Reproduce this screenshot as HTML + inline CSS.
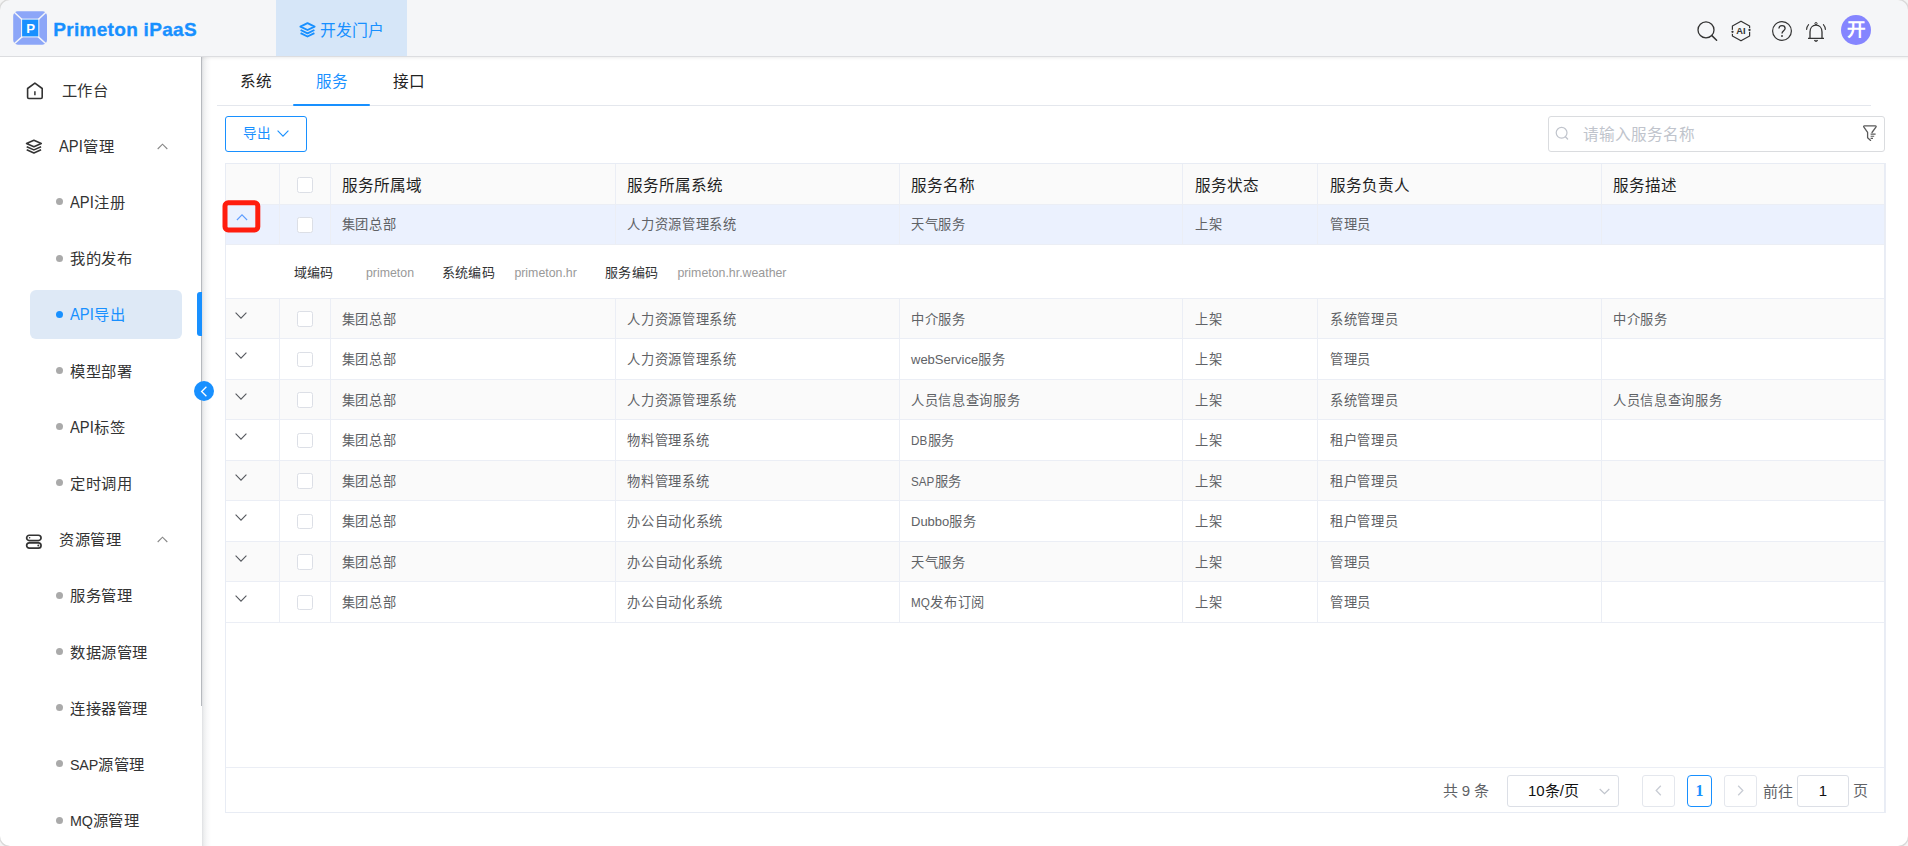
<!DOCTYPE html>
<html lang="zh-CN">
<head>
<meta charset="utf-8">
<title>Primeton iPaaS</title>
<style>
*{box-sizing:border-box;margin:0;padding:0}
html,body{width:1908px;height:846px;overflow:hidden;background:#fff}
body{font-family:"Liberation Sans",sans-serif;color:#333;position:relative}
.abs{position:absolute}
svg{display:block;overflow:visible}
i{font-style:normal}

/* header */
#hdr{position:absolute;left:0;top:0;width:1908px;height:56px;background:#f5f6f8}
#hdrline{position:absolute;left:0;top:56px;width:1908px;height:1px;background:#dcdde0}
#logo{position:absolute;left:13px;top:11px;width:34px;height:34px}
#brand{position:absolute;left:53.3px;top:17px;height:26px;line-height:26px;font-size:19px;font-weight:bold;color:#1890ff;white-space:nowrap;letter-spacing:0.3px;-webkit-text-stroke:0.35px #1890ff}
#ptab{position:absolute;left:276px;top:0;width:131px;height:56px;background:#d6e6f8}
#ptab span{position:absolute;left:44.4px;top:19.4px;height:24px;line-height:24px;font-size:15.9px;color:#1890ff;white-space:nowrap}
#ptab svg{position:absolute;left:22.8px;top:22.3px}
#avatar{position:absolute;left:1841px;top:15px;width:30px;height:30px;border-radius:50%;background:#8585ff;color:#fff;font-weight:bold;font-size:18.6px;line-height:29px;text-align:center}

/* sidebar */
#side{position:absolute;left:0;top:57px;width:201px;height:789px;background:#fff}
#thumb{position:absolute;left:201px;top:57px;width:1px;height:649px;background:#b6b9be}
.mi{position:absolute;left:0;width:201px;height:56px;line-height:56px;font-size:15.3px;letter-spacing:.6px;color:#333;white-space:nowrap}
.la{font-size:14.3px;letter-spacing:-.2px}
.ap{display:inline-block;line-height:1;font-size:16.4px;letter-spacing:0;transform:scaleX(.9);transform-origin:left center;margin-right:-2px}
.mi .t{position:absolute;top:1.2px}
.mi.top .t{left:61.5px}
.mi.sub .t{left:70px}
.mi .dot{position:absolute;left:56px;top:24.6px;width:7px;height:7px;border-radius:50%;background:#aaa}
.mi svg{position:absolute}
#actbg{position:absolute;left:30px;top:290px;width:152px;height:49px;border-radius:6px;background:#dee9f6}
#actbar{position:absolute;left:197px;top:292px;width:4.5px;height:44px;border-radius:3px 0 0 3px;background:#1890ff}
.mi.act{color:#1890ff}
.mi.act .dot{background:#1890ff}
#collapse{position:absolute;left:194px;top:381px;width:20px;height:20px;border-radius:50%;background:#1890ff}

/* main */
#main{position:absolute;left:202px;top:57px;width:1706px;height:789px;background:linear-gradient(to right,#dfe0e3 0,#eeeff0 2px,#f8f8f9 5px,#fff 9px);box-shadow:inset 0 4px 4px -4px rgba(0,0,0,.12)}
.tab{position:absolute;top:69.4px;height:26px;line-height:26px;font-size:15.6px;color:#222;white-space:nowrap}
#tabline{position:absolute;left:217px;top:105px;width:1654px;height:1px;background:#e4e7ed}
#tabact{position:absolute;left:293px;top:104px;width:77.4px;height:2px;border-radius:1px;background:#1890ff}
#exp{position:absolute;left:225px;top:116px;width:82px;height:36px;border:1px solid #1890ff;border-radius:3px;background:#fff;color:#1890ff;font-size:13.6px}
#exp span{position:absolute;left:16.6px;top:0;height:34px;line-height:33px}
#search{position:absolute;left:1548px;top:116px;width:337px;height:36px;border:1px solid #dadcdf;border-radius:3px;background:#fff}
#search span{position:absolute;left:34px;top:0;height:34px;line-height:35px;font-size:15.6px;color:#c0c4cc;white-space:nowrap}

/* table */
#tbl{position:absolute;left:225px;top:163px;width:1660px;height:650px;border:1px solid #e8ecf4}
.row{position:absolute;left:226px;width:1658px}
.hb{position:absolute;left:226px;width:1658px;height:1px;background:#ebeef5}
.row.h{background:#fafafa}
.row.s{background:#fafafa}
.row.hl{background:#ebf1fe}
.c{position:absolute;top:0;height:100%;white-space:nowrap;font-size:13.25px;letter-spacing:.7px;color:#606266}
.c .l{font-size:13px;letter-spacing:0}
.c .u{display:inline-block;line-height:1;font-size:13.4px;letter-spacing:0;transform:scaleX(.87);transform-origin:left center}
.row.h .c{font-size:15.6px;letter-spacing:0;color:#1f1f1f}
.vl{position:absolute;top:0;width:1px;background:#ebeef5}
.cb{position:absolute;left:297.2px;width:15.4px;height:15.2px;border:1px solid #dcdfe6;border-radius:2.5px;background:#fff}
.chev{position:absolute;left:236.5px}
#red{position:absolute;left:222.4px;top:200.3px;width:38px;height:32.2px;border:5px solid #ff1d0e;border-radius:6px}
.exl{position:absolute;top:259px;height:28px;line-height:28px;font-size:13px;letter-spacing:.4px;color:#303133;white-space:nowrap}
.exv{position:absolute;top:259px;height:28px;line-height:28px;font-size:12.35px;color:#999;white-space:nowrap}

/* pagination */
.pg{position:absolute;top:775px;height:32px;line-height:30.6px;font-size:15px;color:#606266;white-space:nowrap}
.pbox{border:1px solid #dcdfe6;border-radius:3px;background:#fff}
</style>
</head>
<body>
<!-- header -->
<div id="hdr"></div><div id="hdrline"></div>
<svg id="logo" viewBox="0 0 34 34">
  <rect x="0.2" y="0.3" width="33.8" height="33.4" rx="4.6" fill="#8ca6f8"/>
  <path d="M1 1L9.5 9M33.2 1L24.8 9M1 33L9.5 25.4M33.2 33L24.8 25.4" stroke="#f5f6f8" stroke-width="1.5"/>
  <rect x="8.1" y="7.6" width="18.2" height="18.8" fill="#f5f6f8"/>
  <rect x="9.1" y="8.6" width="16.2" height="16.8" fill="#1890ff"/>
  <text x="17.6" y="22.4" font-family="Liberation Sans, sans-serif" font-size="13.2" font-weight="bold" fill="#fff" text-anchor="middle">P</text>
</svg>
<div id="brand">Primeton iPaaS</div>
<div id="ptab">
  <svg width="17" height="16" viewBox="0 0 17 16"><path d="M8.5 1.2L15.6 4.6L8.5 8L1.4 4.6Z M1.6 8L8.5 11.3L15.4 8 M1.6 11.2L8.5 14.5L15.4 11.2" fill="none" stroke="#1890ff" stroke-width="1.9" stroke-linejoin="round"/></svg>
  <span>开发门户</span>
</div>
<svg class="abs" style="left:1694px;top:19px" width="26" height="24" viewBox="0 0 26 24"><circle cx="12" cy="10.9" r="8" fill="none" stroke="#333" stroke-width="1.3"/><path d="M17.9 16.6L22.6 21.2" stroke="#333" stroke-width="1.5" stroke-linecap="round"/></svg>
<svg class="abs" style="left:1730px;top:20px" width="22" height="22" viewBox="0 0 22 22"><path d="M11 1.2L19.6 6V16L11 20.8L2.4 16V6Z" fill="none" stroke="#333" stroke-width="1.2" stroke-linejoin="round"/><circle cx="2.4" cy="11.8" r="2.1" fill="#f5f6f8"/><circle cx="19.6" cy="10" r="2.1" fill="#f5f6f8"/><circle cx="2.5" cy="11.8" r="1.15" fill="#333"/><circle cx="19.5" cy="10" r="1.15" fill="#333"/><text x="11" y="14.1" font-family="Liberation Sans, sans-serif" font-size="9.3" font-weight="bold" fill="#333" text-anchor="middle">AI</text></svg>
<svg class="abs" style="left:1771px;top:20px" width="22" height="22" viewBox="0 0 22 22"><circle cx="11" cy="11" r="9.4" fill="none" stroke="#333" stroke-width="1.2"/><path d="M7.9 8.6C7.9 6.8 9.2 5.7 11 5.7C12.8 5.7 14.1 6.8 14.1 8.4C14.1 10.6 11 10.8 11 13.4" fill="none" stroke="#333" stroke-width="1.3"/><circle cx="11" cy="16" r="0.95" fill="#333"/></svg>
<svg class="abs" style="left:1804px;top:21px" width="24" height="22" viewBox="0 0 24 22"><path d="M4 17.4H20M6 17.2V11C6 7 8.4 4.2 12 4.2C15.6 4.2 18 7 18 11V17.2" fill="none" stroke="#333" stroke-width="1.3" stroke-linejoin="round"/><circle cx="12" cy="2.6" r="1.1" fill="none" stroke="#333" stroke-width="1"/><path d="M10 19.4H14L12 20.8Z" fill="#333" stroke="#333" stroke-width="0.6"/><path d="M4.6 3.6C3.3 5 2.7 6.6 2.6 8.4M19.4 3.6C20.7 5 21.3 6.6 21.4 8.4" fill="none" stroke="#333" stroke-width="1.1" stroke-linecap="round"/></svg>
<div id="avatar">开</div>
<!-- sidebar -->
<div id="side"></div><div id="main"></div><div id="thumb"></div>
<div id="actbg"></div><div id="actbar"></div>
<div class="mi top" style="top:61.50px"><svg style="left:26px;top:20px" width="18" height="18" viewBox="0 0 18 18"><path d="M1.6 6.5L8.9 1.1L16.2 6.5V15.3Q16.2 16.5 15 16.5H2.8Q1.6 16.5 1.6 15.3Z" fill="none" stroke="#333" stroke-width="1.6" stroke-linejoin="round"/><path d="M8.9 9.2V13.2" stroke="#333" stroke-width="1.5"/></svg><span class="t">工作台</span></div>
<div class="mi top" style="top:117.70px"><svg style="left:25px;top:21.8px" width="18" height="16" viewBox="0 0 18 16"><path d="M8.9 1.2L16.3 4.5L8.9 7.8L1.5 4.5Z M1.7 7.7L8.9 10.9L16.1 7.7 M1.7 10.8L8.9 14L16.1 10.8" fill="none" stroke="#333" stroke-width="1.5" stroke-linejoin="round"/></svg><span class="t" style="left:59px"><i class="ap">API</i>管理</span><svg style="left:157px;top:25px" width="11" height="7" viewBox="0 0 11 7"><path d="M0.7 6L5.5 1.2L10.3 6" fill="none" stroke="#888" stroke-width="1.1"/></svg></div>
<div class="mi sub" style="top:173.90px"><i class="dot"></i><span class="t"><i class="ap">API</i>注册</span></div>
<div class="mi sub" style="top:230.10px"><i class="dot"></i><span class="t">我的发布</span></div>
<div class="mi sub act" style="top:286.30px"><i class="dot"></i><span class="t"><i class="ap">API</i>导出</span></div>
<div class="mi sub" style="top:342.50px"><i class="dot"></i><span class="t">模型部署</span></div>
<div class="mi sub" style="top:398.70px"><i class="dot"></i><span class="t"><i class="ap">API</i>标签</span></div>
<div class="mi sub" style="top:454.90px"><i class="dot"></i><span class="t">定时调用</span></div>
<div class="mi top" style="top:511.10px"><svg style="left:25px;top:22.5px" width="18" height="16" viewBox="0 0 18 16"><rect x="1.65" y="1.25" width="14.4" height="5.3" rx="2.65" fill="none" stroke="#333" stroke-width="1.7"/><rect x="1.65" y="8.85" width="14.4" height="5.3" rx="2.65" fill="none" stroke="#333" stroke-width="1.7"/><circle cx="4.6" cy="3.8" r="0.75" fill="#333"/><circle cx="13.3" cy="11.5" r="0.95" fill="#333"/></svg><span class="t" style="left:59px">资源管理</span><svg style="left:157px;top:25px" width="11" height="7" viewBox="0 0 11 7"><path d="M0.7 6L5.5 1.2L10.3 6" fill="none" stroke="#888" stroke-width="1.1"/></svg></div>
<div class="mi sub" style="top:567.30px"><i class="dot"></i><span class="t">服务管理</span></div>
<div class="mi sub" style="top:623.50px"><i class="dot"></i><span class="t">数据源管理</span></div>
<div class="mi sub" style="top:679.70px"><i class="dot"></i><span class="t">连接器管理</span></div>
<div class="mi sub" style="top:735.90px"><i class="dot"></i><span class="t"><span class="la">SAP</span>源管理</span></div>
<div class="mi sub" style="top:792.10px"><i class="dot"></i><span class="t"><span class="la">MQ</span>源管理</span></div>
<div id="collapse"><svg style="position:absolute;left:5.5px;top:4.5px" width="8" height="11" viewBox="0 0 8 11"><path d="M6.4 0.8L1.6 5.5L6.4 10.2" fill="none" stroke="#fff" stroke-width="1.3"/></svg></div>
<!-- main -->
<div class="tab" style="left:240px">系统</div><div class="tab" style="left:316px;color:#1890ff">服务</div><div class="tab" style="left:393px">接口</div>
<div id="tabline"></div><div id="tabact"></div>
<div id="exp"><span>导出</span><svg class="abs" style="left:51px;top:13px" width="12" height="7" viewBox="0 0 12 7"><path d="M0.6 0.7L6 6.2L11.4 0.7" fill="none" stroke="#1890ff" stroke-width="1.1"/></svg></div>
<div id="search"><svg class="abs" style="left:5.8px;top:9.3px" width="15" height="15" viewBox="0 0 15 15"><circle cx="6.6" cy="6.8" r="5.4" fill="none" stroke="#c0c4cc" stroke-width="1.2"/><path d="M10.4 10.8L12.6 13" stroke="#c0c4cc" stroke-width="1.3" stroke-linecap="round"/></svg><span>请输入服务名称</span></div>
<svg class="abs" style="left:1860px;top:120px" width="22" height="24" viewBox="1860 120 22 24"><path d="M1864.6 125.8H1875.2Q1876.7 125.9 1875.9 127.2L1872 132.5M1864.6 125.8Q1863.1 125.9 1863.9 127.2L1867.6 132.4V137.8L1870.6 140.4" fill="none" stroke="#5a5a5a" stroke-width="1.3" stroke-linecap="round" stroke-linejoin="round"/><path d="M1870.6 134.1H1875.6M1870.6 136.3H1874.2M1870.6 138.4H1873" stroke="#5a5a5a" stroke-width="1.1"/></svg>
<div id="tbl"></div><i class="abs" style="left:1885px;top:163px;width:1px;height:650px;background:#eaedf5"></i>
<div class="row h" style="top:164px;height:40px"><i class="vl" style="left:53px;height:41px"></i><i class="vl" style="left:104px;height:41px"></i><i class="vl" style="left:389px;height:41px"></i><i class="vl" style="left:673px;height:41px"></i><i class="vl" style="left:956px;height:41px"></i><i class="vl" style="left:1091px;height:41px"></i><i class="vl" style="left:1375px;height:41px"></i><span class="c" style="left:115.5px;top:1.5px;line-height:40px">服务所属域</span><span class="c" style="left:401.2px;top:1.5px;line-height:40px">服务所属系统</span><span class="c" style="left:685.0px;top:1.5px;line-height:40px">服务名称</span><span class="c" style="left:969.2px;top:1.5px;line-height:40px">服务状态</span><span class="c" style="left:1104.0px;top:1.5px;line-height:40px">服务负责人</span><span class="c" style="left:1387.0px;top:1.5px;line-height:40px">服务描述</span></div><i class="hb" style="top:204px"></i>
<i class="cb" style="top:177px;height:16px"></i>
<div class="row hl" style="top:205px;height:39px"><i class="vl" style="left:53px;height:40px"></i><i class="vl" style="left:104px;height:40px"></i><i class="vl" style="left:389px;height:40px"></i><i class="vl" style="left:673px;height:40px"></i><i class="vl" style="left:956px;height:40px"></i><i class="vl" style="left:1091px;height:40px"></i><i class="vl" style="left:1375px;height:40px"></i><span class="c" style="left:115.5px;top:0.0px;line-height:39px">集团总部</span><span class="c" style="left:401.2px;top:0.0px;line-height:39px">人力资源管理系统</span><span class="c" style="left:685.0px;top:0.0px;line-height:39px">天气服务</span><span class="c" style="left:969.2px;top:0.0px;line-height:39px">上架</span><span class="c" style="left:1104.0px;top:0.0px;line-height:39px">管理员</span></div><i class="hb" style="top:244px"></i>
<i class="cb" style="top:217.4px"></i>
<svg class="chev" style="left:236px;top:213.6px" width="12" height="7" viewBox="0 0 12 7"><path d="M0.9 6L6 0.8L11.1 6" fill="none" stroke="#5b9bff" stroke-width="1.1"/></svg>
<i class="hb" style="top:298px"></i>
<span class="exl" style="left:293.5px">域编码</span>
<span class="exl" style="left:441.6px">系统编码</span>
<span class="exl" style="left:604.8px">服务编码</span>
<span class="exv" style="left:366.0px">primeton</span>
<span class="exv" style="left:514.4px">primeton.hr</span>
<span class="exv" style="left:677.4px">primeton.hr.weather</span>
<div class="row s" style="top:299px;height:39px"><i class="vl" style="left:53px;height:40px"></i><i class="vl" style="left:104px;height:40px"></i><i class="vl" style="left:389px;height:40px"></i><i class="vl" style="left:673px;height:40px"></i><i class="vl" style="left:956px;height:40px"></i><i class="vl" style="left:1091px;height:40px"></i><i class="vl" style="left:1375px;height:40px"></i><span class="c" style="left:115.5px;top:0.9px;line-height:39px">集团总部</span><span class="c" style="left:401.2px;top:0.9px;line-height:39px">人力资源管理系统</span><span class="c" style="left:685.0px;top:0.9px;line-height:39px">中介服务</span><span class="c" style="left:969.2px;top:0.9px;line-height:39px">上架</span><span class="c" style="left:1104.0px;top:0.9px;line-height:39px">系统管理员</span><span class="c" style="left:1387.0px;top:0.9px;line-height:39px">中介服务</span></div><i class="hb" style="top:338px"></i>
<i class="cb" style="top:311.4px"></i>
<svg class="chev" style="left:235.3px;top:311.7px" width="12" height="7" viewBox="0 0 12 7"><path d="M0.6 0.7L6 6.1L11.4 0.7" fill="none" stroke="#55585e" stroke-width="1.1"/></svg>
<div class="row " style="top:339px;height:40px"><i class="vl" style="left:53px;height:41px"></i><i class="vl" style="left:104px;height:41px"></i><i class="vl" style="left:389px;height:41px"></i><i class="vl" style="left:673px;height:41px"></i><i class="vl" style="left:956px;height:41px"></i><i class="vl" style="left:1091px;height:41px"></i><i class="vl" style="left:1375px;height:41px"></i><span class="c" style="left:115.5px;top:0.9px;line-height:40px">集团总部</span><span class="c" style="left:401.2px;top:0.9px;line-height:40px">人力资源管理系统</span><span class="c" style="left:685.0px;top:0.9px;line-height:40px"><i class="l">webService</i>服务</span><span class="c" style="left:969.2px;top:0.9px;line-height:40px">上架</span><span class="c" style="left:1104.0px;top:0.9px;line-height:40px">管理员</span></div><i class="hb" style="top:379px"></i>
<i class="cb" style="top:351.9px"></i>
<svg class="chev" style="left:235.3px;top:351.7px" width="12" height="7" viewBox="0 0 12 7"><path d="M0.6 0.7L6 6.1L11.4 0.7" fill="none" stroke="#55585e" stroke-width="1.1"/></svg>
<div class="row s" style="top:380px;height:39px"><i class="vl" style="left:53px;height:40px"></i><i class="vl" style="left:104px;height:40px"></i><i class="vl" style="left:389px;height:40px"></i><i class="vl" style="left:673px;height:40px"></i><i class="vl" style="left:956px;height:40px"></i><i class="vl" style="left:1091px;height:40px"></i><i class="vl" style="left:1375px;height:40px"></i><span class="c" style="left:115.5px;top:0.9px;line-height:39px">集团总部</span><span class="c" style="left:401.2px;top:0.9px;line-height:39px">人力资源管理系统</span><span class="c" style="left:685.0px;top:0.9px;line-height:39px">人员信息查询服务</span><span class="c" style="left:969.2px;top:0.9px;line-height:39px">上架</span><span class="c" style="left:1104.0px;top:0.9px;line-height:39px">系统管理员</span><span class="c" style="left:1387.0px;top:0.9px;line-height:39px">人员信息查询服务</span></div><i class="hb" style="top:419px"></i>
<i class="cb" style="top:392.4px"></i>
<svg class="chev" style="left:235.3px;top:392.7px" width="12" height="7" viewBox="0 0 12 7"><path d="M0.6 0.7L6 6.1L11.4 0.7" fill="none" stroke="#55585e" stroke-width="1.1"/></svg>
<div class="row " style="top:420px;height:40px"><i class="vl" style="left:53px;height:41px"></i><i class="vl" style="left:104px;height:41px"></i><i class="vl" style="left:389px;height:41px"></i><i class="vl" style="left:673px;height:41px"></i><i class="vl" style="left:956px;height:41px"></i><i class="vl" style="left:1091px;height:41px"></i><i class="vl" style="left:1375px;height:41px"></i><span class="c" style="left:115.5px;top:0.9px;line-height:40px">集团总部</span><span class="c" style="left:401.2px;top:0.9px;line-height:40px">物料管理系统</span><span class="c" style="left:685.0px;top:0.9px;line-height:40px"><i class="u" style="margin-right:-1.9px">DB</i>服务</span><span class="c" style="left:969.2px;top:0.9px;line-height:40px">上架</span><span class="c" style="left:1104.0px;top:0.9px;line-height:40px">租户管理员</span></div><i class="hb" style="top:460px"></i>
<i class="cb" style="top:432.9px"></i>
<svg class="chev" style="left:235.3px;top:432.7px" width="12" height="7" viewBox="0 0 12 7"><path d="M0.6 0.7L6 6.1L11.4 0.7" fill="none" stroke="#55585e" stroke-width="1.1"/></svg>
<div class="row s" style="top:461px;height:39px"><i class="vl" style="left:53px;height:40px"></i><i class="vl" style="left:104px;height:40px"></i><i class="vl" style="left:389px;height:40px"></i><i class="vl" style="left:673px;height:40px"></i><i class="vl" style="left:956px;height:40px"></i><i class="vl" style="left:1091px;height:40px"></i><i class="vl" style="left:1375px;height:40px"></i><span class="c" style="left:115.5px;top:0.9px;line-height:39px">集团总部</span><span class="c" style="left:401.2px;top:0.9px;line-height:39px">物料管理系统</span><span class="c" style="left:685.0px;top:0.9px;line-height:39px"><i class="u" style="margin-right:-3.2px">SAP</i>服务</span><span class="c" style="left:969.2px;top:0.9px;line-height:39px">上架</span><span class="c" style="left:1104.0px;top:0.9px;line-height:39px">租户管理员</span></div><i class="hb" style="top:500px"></i>
<i class="cb" style="top:473.4px"></i>
<svg class="chev" style="left:235.3px;top:473.7px" width="12" height="7" viewBox="0 0 12 7"><path d="M0.6 0.7L6 6.1L11.4 0.7" fill="none" stroke="#55585e" stroke-width="1.1"/></svg>
<div class="row " style="top:501px;height:40px"><i class="vl" style="left:53px;height:41px"></i><i class="vl" style="left:104px;height:41px"></i><i class="vl" style="left:389px;height:41px"></i><i class="vl" style="left:673px;height:41px"></i><i class="vl" style="left:956px;height:41px"></i><i class="vl" style="left:1091px;height:41px"></i><i class="vl" style="left:1375px;height:41px"></i><span class="c" style="left:115.5px;top:0.9px;line-height:40px">集团总部</span><span class="c" style="left:401.2px;top:0.9px;line-height:40px">办公自动化系统</span><span class="c" style="left:685.0px;top:0.9px;line-height:40px"><i class="l">Dubbo</i>服务</span><span class="c" style="left:969.2px;top:0.9px;line-height:40px">上架</span><span class="c" style="left:1104.0px;top:0.9px;line-height:40px">租户管理员</span></div><i class="hb" style="top:541px"></i>
<i class="cb" style="top:513.9px"></i>
<svg class="chev" style="left:235.3px;top:513.7px" width="12" height="7" viewBox="0 0 12 7"><path d="M0.6 0.7L6 6.1L11.4 0.7" fill="none" stroke="#55585e" stroke-width="1.1"/></svg>
<div class="row s" style="top:542px;height:39px"><i class="vl" style="left:53px;height:40px"></i><i class="vl" style="left:104px;height:40px"></i><i class="vl" style="left:389px;height:40px"></i><i class="vl" style="left:673px;height:40px"></i><i class="vl" style="left:956px;height:40px"></i><i class="vl" style="left:1091px;height:40px"></i><i class="vl" style="left:1375px;height:40px"></i><span class="c" style="left:115.5px;top:0.9px;line-height:39px">集团总部</span><span class="c" style="left:401.2px;top:0.9px;line-height:39px">办公自动化系统</span><span class="c" style="left:685.0px;top:0.9px;line-height:39px">天气服务</span><span class="c" style="left:969.2px;top:0.9px;line-height:39px">上架</span><span class="c" style="left:1104.0px;top:0.9px;line-height:39px">管理员</span></div><i class="hb" style="top:581px"></i>
<i class="cb" style="top:554.4px"></i>
<svg class="chev" style="left:235.3px;top:554.7px" width="12" height="7" viewBox="0 0 12 7"><path d="M0.6 0.7L6 6.1L11.4 0.7" fill="none" stroke="#55585e" stroke-width="1.1"/></svg>
<div class="row " style="top:582px;height:40px"><i class="vl" style="left:53px;height:41px"></i><i class="vl" style="left:104px;height:41px"></i><i class="vl" style="left:389px;height:41px"></i><i class="vl" style="left:673px;height:41px"></i><i class="vl" style="left:956px;height:41px"></i><i class="vl" style="left:1091px;height:41px"></i><i class="vl" style="left:1375px;height:41px"></i><span class="c" style="left:115.5px;top:0.9px;line-height:40px">集团总部</span><span class="c" style="left:401.2px;top:0.9px;line-height:40px">办公自动化系统</span><span class="c" style="left:685.0px;top:0.9px;line-height:40px"><i class="u" style="margin-right:-2.4px">MQ</i>发布订阅</span><span class="c" style="left:969.2px;top:0.9px;line-height:40px">上架</span><span class="c" style="left:1104.0px;top:0.9px;line-height:40px">管理员</span></div><i class="hb" style="top:622px"></i>
<i class="cb" style="top:594.9px"></i>
<svg class="chev" style="left:235.3px;top:594.7px" width="12" height="7" viewBox="0 0 12 7"><path d="M0.6 0.7L6 6.1L11.4 0.7" fill="none" stroke="#55585e" stroke-width="1.1"/></svg>
<svg class="abs" style="left:215px;top:195px" width="55" height="45" viewBox="215 195 55 45"><rect x="225" y="202.85" width="32.8" height="27.05" rx="3.2" fill="none" stroke="#ff1d0e" stroke-width="5"/></svg>
<i class="hb" style="top:767px"></i>
<span class="pg" style="left:1442.5px;top:776.2px">共 9 条</span>
<div class="pg pbox" style="left:1507px;width:112px"><span class="abs" style="left:20px;top:0;color:#111">10条/页</span><svg class="abs" style="left:91px;top:12.2px" width="11" height="7" viewBox="0 0 11 7"><path d="M0.7 1L5.5 5.6L10.3 1" fill="none" stroke="#c0c4cc" stroke-width="1.2"/></svg></div>
<div class="pg pbox" style="left:1642px;width:32.5px;border-color:#e4e7ed"><svg class="abs" style="left:11.6px;top:8.6px" width="7" height="11" viewBox="0 0 7 11"><path d="M5.8 0.8L1.2 5.5L5.8 10.2" fill="none" stroke="#c8ccd4" stroke-width="1.3"/></svg></div>
<div class="pg pbox" style="left:1687px;width:25px;border-color:#1890ff;border-radius:4px;color:#1890ff;text-align:center;font-family:'Liberation Serif',serif;font-weight:bold;font-size:16px">1</div>
<div class="pg pbox" style="left:1724.3px;width:32.5px;border-color:#e4e7ed"><svg class="abs" style="left:11.6px;top:8.6px" width="7" height="11" viewBox="0 0 7 11"><path d="M1.2 0.8L5.8 5.5L1.2 10.2" fill="none" stroke="#c8ccd4" stroke-width="1.3"/></svg></div>
<span class="pg" style="left:1762.5px;top:776.6px">前往</span>
<div class="pg pbox" style="left:1797px;width:51.6px;text-align:center;color:#111">1</div>
<span class="pg" style="left:1852.5px;top:776.4px">页</span>
<div style="position:absolute;left:0;top:0;width:1908px;height:846px;border-radius:10px;box-shadow:0 0 0 1.2px #d9d9d9,0 0 0 40px #f4f4f4;pointer-events:none"></div>
</body>
</html>
